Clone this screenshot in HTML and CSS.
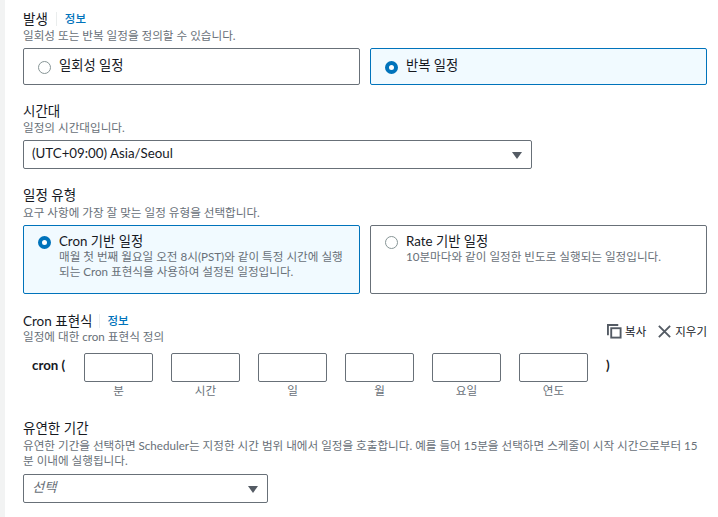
FILE: index.html
```
<!DOCTYPE html>
<html lang="ko">
<head>
<meta charset="utf-8">
<title>일정 패턴</title>
<link rel="stylesheet" href="styles.css">
</head>
<body>
<main class="panel">
  <section class="field occurrence">
    <div class="label-row"><span class="label">발생</span><a class="info">정보</a></div>
    <p class="desc">일회성 또는 반복 일정을 정의할 수 있습니다.</p>
    <div class="cards short">
      <div class="card"><span class="radio"></span><span class="card-title">일회성 일정</span></div>
      <div class="card selected"><span class="radio on"></span><span class="card-title">반복 일정</span></div>
    </div>
  </section>

  <section class="field timezone">
    <div class="label-row"><span class="label">시간대</span></div>
    <p class="desc">일정의 시간대입니다.</p>
    <div class="select wide"><span class="value">(UTC+09:00) Asia/Seoul</span><span class="caret"></span></div>
  </section>

  <section class="field type">
    <div class="label-row"><span class="label">일정 유형</span></div>
    <p class="desc">요구 사항에 가장 잘 맞는 일정 유형을 선택합니다.</p>
    <div class="cards tall">
      <div class="card selected"><span class="radio on"></span>
        <div><div class="card-title">Cron 기반 일정</div><p class="card-desc">매월 첫 번째 월요일 오전 8시(PST)와 같이 특정 시간에 실행되는 Cron 표현식을 사용하여 설정된 일정입니다.</p></div>
      </div>
      <div class="card"><span class="radio"></span>
        <div><div class="card-title">Rate 기반 일정</div><p class="card-desc">10분마다와 같이 일정한 빈도로 실행되는 일정입니다.</p></div>
      </div>
    </div>
  </section>

  <section class="field cron">
    <div class="cron-head">
      <div>
        <div class="label-row"><span class="label">Cron 표현식</span><a class="info">정보</a></div>
        <p class="desc">일정에 대한 cron 표현식 정의</p>
      </div>
      <div class="actions">
        <span class="action"><svg class="icon" viewBox="0 0 16 16"><path d="M1 12V1h11" /><rect x="4.5" y="4.5" width="10" height="10" /></svg>복사</span>
        <span class="action"><svg class="icon" viewBox="0 0 16 16"><path d="M2 2l12 12M14 2L2 14" /></svg>지우기</span>
      </div>
    </div>
    <div class="cron-row">
      <span class="paren open">cron (</span>
      <div class="slot"><div class="input"></div><span>분</span></div>
      <div class="slot"><div class="input"></div><span>시간</span></div>
      <div class="slot"><div class="input"></div><span>일</span></div>
      <div class="slot"><div class="input"></div><span>월</span></div>
      <div class="slot"><div class="input"></div><span>요일</span></div>
      <div class="slot"><div class="input"></div><span>연도</span></div>
      <span class="paren">)</span>
    </div>
  </section>

  <section class="field window">
    <div class="label-row"><span class="label">유연한 기간</span></div>
    <p class="desc">유연한 기간을 선택하면 Scheduler는 지정한 시간 범위 내에서 일정을 호출합니다. 예를 들어 15분을 선택하면 스케줄이 시작 시간으로부터 15분 이내에 실행됩니다.</p>
    <div class="select narrow"><span class="value placeholder">선택</span><span class="caret"></span></div>
  </section>
</main>
</body>
</html>
```
FILE: styles.css
```
* { box-sizing: border-box; }
html, body { margin: 0; height: 100%; }
body {
  background: #fff;
  color: #16191f;
  font-family: Lato, "Noto Sans CJK KR", sans-serif;
  font-size: 14px;
  overflow: hidden;
}
.panel {
  height: 517px;
  padding: 10px 11px 0 18px;
  border-left: 5px solid #f2f3f3;
}
p { margin: 0; }
.field { display: flex; flex-direction: column; }
.timezone { margin-top: 17px; }
.type { margin-top: 17px; }
.cron { margin-top: 18px; }
.window { margin-top: 21px; }
.label-row { display: flex; align-items: center; height: 18px; line-height: 18px; font-size: 13.5px; }
.info {
  color: #0073bb;
  font-size: 11.5px;
  font-weight: 500;
  margin-left: 8px;
  padding-left: 8px;
  border-left: 1px solid #eaeded;
  line-height: 14px;
}
.cron .info { margin-left: 6px; }
.desc { color: #687078; font-size: 11.6px; line-height: 15px; }
.type .desc, .window .desc { margin-top: 1px; }
.cron .desc { margin-top: -1px; }
.cards { display: grid; grid-template-columns: 337px 337px; gap: 10px; margin-top: 5px; }
.short { height: 37px; }
.tall { height: 69px; }
.card {
  display: flex;
  gap: 8px;
  padding: 7px 14px;
  border: 1px solid #687078;
  border-radius: 2px;
}
.short .card { align-items: center; padding: 0 14px; }
.short .card-title { margin-bottom: 3px; }
.card.selected { background: #f1faff; border-color: #0073bb; }
.card-title { font-size: 13.3px; line-height: 16px; }
.card-desc { color: #687078; font-size: 11.6px; line-height: 15px; }
.radio {
  flex: none;
  width: 13px;
  height: 13px;
  margin-top: 3px;
  border: 1px solid #879596;
  border-radius: 50%;
  background: #fff;
}
.short .radio { margin-top: 2px; }
.radio.on { border: 4px solid #0073bb; }
.select {
  display: flex;
  align-items: center;
  justify-content: space-between;
  height: 29px;
  padding: 0 9px 0 8px;
  margin-top: 5px;
  border: 1px solid #687078;
  border-radius: 2px;
}
.wide { width: 509px; }
.narrow { width: 245px; margin-top: 6px; }
.value { font-size: 13.3px; margin-bottom: 3px; }
.placeholder { color: #687078; font-style: italic; margin-bottom: 5px; }
.caret {
  width: 0;
  height: 0;
  margin-top: 2px;
  border-left: 5px solid transparent;
  border-right: 5px solid transparent;
  border-top: 7px solid #545b64;
}
.cron-head { display: flex; justify-content: space-between; align-items: flex-end; }
.actions { display: flex; gap: 11px; color: #16191f; font-size: 11.5px; margin-bottom: 5px; }
.action { display: flex; align-items: center; gap: 3px; line-height: 15px; }
.icon { width: 15px; height: 15px; fill: none; stroke: #545b64; stroke-width: 2; }
.cron-row { display: flex; margin-top: 9px; }
.paren { font-size: 13.3px; font-weight: 700; line-height: 24px; margin-left: 18px; }
.paren.open { width: 52px; margin-left: 9px; }
.slot { width: 69px; margin-right: 18px; display: flex; flex-direction: column; align-items: center; }
.slot:nth-last-child(2) { margin-right: 0; }
.slot span { color: #687078; font-size: 11.6px; line-height: 15px; margin-top: 1px; }
.input { width: 100%; height: 29px; border: 1px solid #687078; border-radius: 2px; }
```
